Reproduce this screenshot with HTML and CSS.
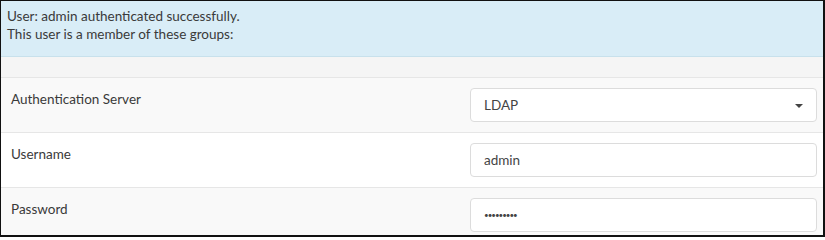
FILE: index.html
```html
<!DOCTYPE html>
<html>
<head>
<meta charset="utf-8">
<link rel="stylesheet" href="styles.css">
</head>
<body>
<div class="frame">
  <div class="alert">
    <div>User: admin authenticated successfully.</div>
    <div>This user is a member of these groups:</div>
  </div>
  <div class="panel-head"></div>
  <div class="row striped">
    <div class="label">Authentication Server</div>
    <div class="control select">
      <span>LDAP</span>
      <span class="caret"></span>
    </div>
  </div>
  <div class="row">
    <div class="label">Username</div>
    <input class="control" type="text" value="admin">
  </div>
  <div class="row striped">
    <div class="label">Password</div>
    <input class="control pw" type="password" value="123456789">
  </div>
</div>
</body>
</html>
```
FILE: styles.css
```css
html, body {
  margin: 0;
  padding: 0;
  background: #fff;
}
body {
  font-family: Lato, "Liberation Sans", sans-serif;
  font-size: 13.5px;
  color: #3a3a3a;
}
.frame {
  width: 825px;
  height: 237px;
  box-sizing: border-box;
  border: 1px solid #111;
  border-right-width: 2px;
  border-bottom-width: 2px;
  overflow: hidden;
}
.alert {
  background: #d9edf7;
  border-bottom: 1px solid #c8e1ec;
  height: 56px;
  box-sizing: border-box;
  padding: 6px 6px;
  line-height: 18px;
  color: #3a3a3a;
}
.panel-head {
  background: #f5f5f5;
  height: 20px;
}
.row {
  display: grid;
  grid-template-columns: 459px 1fr;
  border-top: 1px solid #e6e6e6;
  padding: 10px 6px 10px 10px;
  background: #fff;
}
.row.striped {
  background: #f9f9f9;
}
.label {
  line-height: 20px;
  padding-top: 1px;
  color: #3a3a3a;
}
.control {
  height: 34px;
  box-sizing: border-box;
  border: 1px solid #dcdcdc;
  border-radius: 4px;
  background: #fff;
  padding: 0 13px;
  font-family: inherit;
  font-size: 13.5px;
  color: #444;
  width: 100%;
  margin: 0;
  outline: none;
}
.select {
  display: flex;
  align-items: center;
  justify-content: space-between;
  padding-right: 13px;
}
.caret {
  width: 0;
  height: 0;
  border-left: 4px solid transparent;
  border-right: 4px solid transparent;
  border-top: 4px solid #444;
  margin-top: 1px;
}
.pw {
  font-size: 8px;
  letter-spacing: -1px;
  color: #444;
}
```
